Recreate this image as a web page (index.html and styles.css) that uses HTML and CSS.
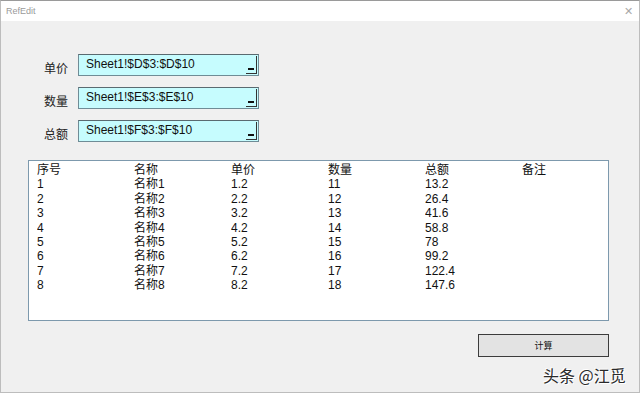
FILE: index.html
```html
<!DOCTYPE html>
<html>

<head>
    <title>RefEdit</title>

    <link rel="stylesheet" href="styles.css">
</head>

<body>
    <div class="window">
        <div class="titlebar">
            <span class="title">RefEdit</span>
            <span class="close">&#x2715;</span>
        </div>

        <div class="content">
            <div class="form">
                <div class="form-row">
                    <label>单价</label>
                    <div class="refedit">
                        <span class="ref-text">Sheet1!$D$3:$D$10</span>
                        <span class="ref-btn"><i></i></span>
                    </div>
                </div>
                <div class="form-row">
                    <label>数量</label>
                    <div class="refedit">
                        <span class="ref-text">Sheet1!$E$3:$E$10</span>
                        <span class="ref-btn"><i></i></span>
                    </div>
                </div>
                <div class="form-row">
                    <label>总额</label>
                    <div class="refedit">
                        <span class="ref-text">Sheet1!$F$3:$F$10</span>
                        <span class="ref-btn"><i></i></span>
                    </div>
                </div>
            </div>

            <div class="listbox">
                <div class="list-row"><span>序号</span><span>名称</span><span>单价</span><span>数量</span><span>总额</span><span>备注</span></div>
                <div class="list-row"><span>1</span><span>名称1</span><span>1.2</span><span>11</span><span>13.2</span><span></span></div>
                <div class="list-row"><span>2</span><span>名称2</span><span>2.2</span><span>12</span><span>26.4</span><span></span></div>
                <div class="list-row"><span>3</span><span>名称3</span><span>3.2</span><span>13</span><span>41.6</span><span></span></div>
                <div class="list-row"><span>4</span><span>名称4</span><span>4.2</span><span>14</span><span>58.8</span><span></span></div>
                <div class="list-row"><span>5</span><span>名称5</span><span>5.2</span><span>15</span><span>78</span><span></span></div>
                <div class="list-row"><span>6</span><span>名称6</span><span>6.2</span><span>16</span><span>99.2</span><span></span></div>
                <div class="list-row"><span>7</span><span>名称7</span><span>7.2</span><span>17</span><span>122.4</span><span></span></div>
                <div class="list-row"><span>8</span><span>名称8</span><span>8.2</span><span>18</span><span>147.6</span><span></span></div>
            </div>

            <div class="actions">
                <button class="calc">计算</button>
            </div>
        </div>

        <!-- watermark on top of the screenshot -->
        <div class="watermark">头条 @江觅</div>
    </div>
</body>

</html>
```

FILE: styles.css
```css
body {
    margin: 0;
    padding: 0;
    background-color: #f0f0f0;
    font-family: "Liberation Sans", "Noto Sans CJK SC", sans-serif;
    color: #1a1a1a;
}

.window {
    position: relative;
    width: 640px;
    height: 393px;
    box-sizing: border-box;
    border: 1px solid #bdbdbd;
    border-top-color: #9a9a9a;
    background-color: #f0f0f0;
    overflow: hidden;
}

.titlebar {
    height: 20px;
    background-color: #fff;
    display: flex;
    align-items: center;
    justify-content: space-between;
    padding: 0 6px 0 5px;
}

.title {
    font-size: 9px;
    color: #9a9a9a;
}

.close {
    font-size: 11px;
    color: #a8a8a8;
}

.content {
    padding: 33px 29px 0 27px;
}

.form {
    display: flex;
    flex-direction: column;
    gap: 11px;
}

.form-row {
    display: flex;
    align-items: center;
    height: 22px;
}

.form-row label {
    width: 34px;
    padding-left: 16px;
    padding-top: 4px;
    font-size: 12px;
    font-family: "Noto Sans CJK SC", sans-serif;
    color: #222;
}

.refedit {
    display: flex;
    width: 181px;
    height: 22px;
    box-sizing: border-box;
    background-color: #c6fcfe;
    border: 1px solid #6f8c96;
    border-top-color: #5a6a70;
}

.ref-text {
    flex: 1;
    font-size: 12px;
    line-height: 18px;
    padding-left: 7px;
    color: #111;
}

.ref-btn {
    position: relative;
    width: 10px;
    margin: 1px 1px 1px 0;
    border-right: 1px solid #333;
    border-bottom: 1px solid #333;
}

.ref-btn i {
    position: absolute;
    left: 2px;
    bottom: 3px;
    width: 6px;
    height: 2px;
    background-color: #111;
}

.listbox {
    margin-top: 18px;
    width: 581px;
    height: 161px;
    box-sizing: border-box;
    background-color: #fff;
    border: 1px solid #7d99ad;
    padding: 2px 0 0 8px;
    font-size: 12px;
}

.list-row {
    display: grid;
    grid-template-columns: repeat(6, 97px);
    height: 14.4px;
    line-height: 14.4px;
    color: #111;
}

.list-row span {
    height: 14.4px;
    overflow: hidden;
}

.actions {
    display: flex;
    justify-content: flex-end;
    margin-top: 13px;
    width: 581px;
}

.calc {
    width: 131px;
    height: 23px;
    background-color: #e3e3e3;
    border: 1px solid #3c3c3c;
    font-size: 9px;
    font-family: "Noto Sans CJK SC", sans-serif;
    color: #111;
    padding: 0;
}

.watermark {
    position: absolute;
    left: 542px;
    top: 362px;
    font-size: 16px;
    font-family: "Noto Sans CJK SC", sans-serif;
    color: #2a2a2a;
    text-shadow: 1px 1px 0 #fff, -1px -1px 0 #fff;
}
```
